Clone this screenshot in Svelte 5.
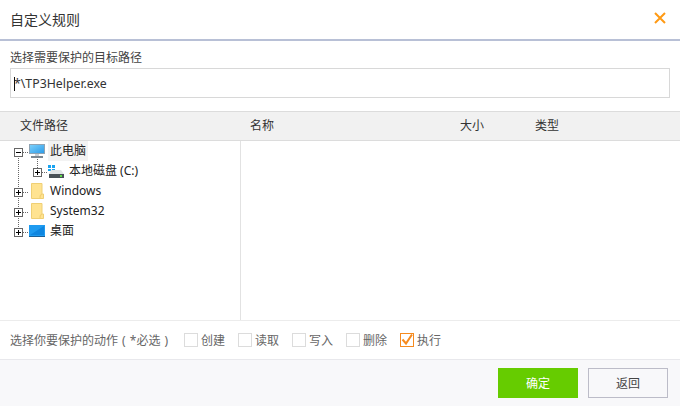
<script>
  const columns = [
    { label: '文件路径', width: 230 },
    { label: '名称', width: 210 },
    { label: '大小', width: 75 },
    { label: '类型', width: 100 }
  ];

  const actions = [
    { label: '创建', checked: false },
    { label: '读取', checked: false },
    { label: '写入', checked: false },
    { label: '删除', checked: false },
    { label: '执行', checked: true }
  ];

  const roots = [
    { label: 'Windows', icon: 'folder' },
    { label: 'System32', icon: 'folder' },
    { label: '桌面', icon: 'desktop' }
  ];
</script>

{#snippet expander(open)}
  <span class="expander">
    <svg width="9" height="9" viewBox="0 0 9 9">
      <rect x="0.500" y="0.500" width="8" height="8" fill="#fff" stroke="#666" />
      <path d={open ? 'M2 4.500h5' : 'M2 4.500h5M4.500 2v5'} stroke="#000" fill="none" />
    </svg>
  </span>
{/snippet}

{#snippet folder()}
  <svg width="13" height="16" viewBox="0 0 13 16">
    <path d="M0.500 0.500h10.500v10.500h1.500v4.500H0.500z" fill="#ffe391" stroke="#efcf74" />
    <path d="M9 15.500v-3l2-1.500" fill="#ffd873" stroke="#efcf74" />
  </svg>
{/snippet}

<div class="dialog">
  <header class="title-bar">
    <h1>自定义规则</h1>
    <button class="close" aria-label="关闭">
      <svg width="12" height="12" viewBox="0 0 12 12">
        <path d="M1 1l10 10M11 1L1 11" stroke="#ff9a14" stroke-width="2" fill="none" />
      </svg>
    </button>
  </header>

  <section class="target">
    <label for="target-path">选择需要保护的目标路径</label>
    <input id="target-path" value="*\TP3Helper.exe" />
    <span class="caret"></span>
  </section>

  <div class="columns">
    {#each columns as col}
      <span style="width: {col.width}px">{col.label}</span>
    {/each}
  </div>

  <div class="browser">
    <div class="tree">
      <div class="row">
        {@render expander(true)}
        <span class="dots"></span>
        <span class="icon">
          <svg width="16" height="14" viewBox="0 0 16 14">
            <defs>
              <linearGradient id="screen" x1="0" y1="0" x2="1" y2="1">
                <stop offset="0" stop-color="#7fd2fb" />
                <stop offset="1" stop-color="#2a9ae8" />
              </linearGradient>
            </defs>
            <rect x="0.500" y="0.500" width="15" height="9" fill="url(#screen)" stroke="#8fa3b3" />
            <rect x="6" y="10" width="4" height="2" fill="#c9d0d6" />
            <rect x="2" y="12" width="12" height="2" fill="#7b8791" />
          </svg>
        </span>
        <span class="name selected">此电脑</span>
        <span class="stem"></span>
      </div>
      <div class="row child">
        {@render expander(false)}
        <span class="dots"></span>
        <span class="icon">
          <svg width="16" height="13" viewBox="0 0 16 13">
            <rect x="0" y="0" width="3" height="3" fill="#19a3f0" />
            <rect x="4" y="0" width="3" height="3" fill="#19a3f0" />
            <rect x="0" y="4" width="3" height="2" fill="#19a3f0" />
            <rect x="4" y="4" width="3" height="2" fill="#19a3f0" />
            <path d="M3 5h10l3 4H1z" fill="#e2e5e7" />
            <rect x="1" y="9" width="15" height="4" fill="#4a5157" />
            <rect x="12" y="10" width="2" height="2" fill="#63e04c" />
          </svg>
        </span>
        <span class="name">本地磁盘 (C:)</span>
      </div>
      {#each roots as node}
        <div class="row">
          {@render expander(false)}
          <span class="dots"></span>
          {#if node.icon === 'folder'}
            <span class="icon folder">{@render folder()}</span>
          {:else}
            <span class="icon">
              <svg width="16" height="12" viewBox="0 0 16 12">
                <rect x="0" y="0" width="16" height="11" fill="#1f9bf0" />
                <path d="M1 10L15 1v9z" fill="#0f86e0" />
                <rect x="0" y="11" width="16" height="1" fill="#1b5f96" />
              </svg>
            </span>
          {/if}
          <span class="name">{node.label}</span>
        </div>
      {/each}
    </div>
    <div class="files"></div>
  </div>

  <div class="actions">
    <span class="prompt">选择你要保护的动作 ( *必选 )</span>
    {#each actions as action}
      <span class="action">
        <span class="box" class:checked={action.checked}>
          {#if action.checked}
            <svg width="12" height="12" viewBox="0 0 12 12">
              <path d="M1.500 5.500l3.500 4 6-9" stroke="#f68a1e" stroke-width="2" fill="none" />
            </svg>
          {/if}
        </span>
        {action.label}
      </span>
    {/each}
  </div>

  <footer class="footer">
    <button class="btn primary">确定</button>
    <button class="btn">返回</button>
  </footer>
</div>

<style>
  :global(body) {
    margin: 0;
    background: #fff;
  }

  .dialog {
    width: 680px;
    height: 406px;
    display: flex;
    flex-direction: column;
    overflow: hidden;
    font-family: "Noto Sans", "Noto Sans CJK SC", sans-serif;
    font-size: 12px;
    color: #333;
    background: #fff;
  }

  .title-bar {
    height: 39px;
    flex: none;
    display: flex;
    align-items: center;
    justify-content: space-between;
    padding: 0 14px 0 10px;
    border-bottom: 2px solid #b8c0d6;
  }

  h1 {
    margin: -2px 0 0;
    font-size: 14px;
    font-weight: 400;
    color: #333;
  }

  .close {
    width: 12px;
    height: 12px;
    padding: 0;
    border: none;
    background: none;
    display: block;
    margin-top: -3px;
  }

  .close svg {
    display: block;
  }

  .target {
    position: relative;
    flex: none;
    display: flex;
    flex-direction: column;
    height: 70px;
    padding: 8px 10px 0;
    box-sizing: border-box;
  }

  label {
    height: 19px;
    line-height: 18px;
    font-size: 12px;
    color: #444;
  }

  input {
    width: 660px;
    height: 30px;
    box-sizing: border-box;
    padding: 0 3px;
    border: 1px solid #d8d8d8;
    outline: none;
    font: inherit;
    font-size: 12.300px;
    color: #333;
  }

  .caret {
    position: absolute;
    left: 14px;
    top: 36px;
    width: 1px;
    height: 14px;
    background: #111;
  }

  .columns {
    flex: none;
    height: 30px;
    box-sizing: border-box;
    display: flex;
    align-items: center;
    padding: 0 0 2px 20px;
    background: #f1f1f1;
    border-top: 1px solid #dcdcdc;
    border-bottom: 1px solid #dcdcdc;
    color: #333;
  }

  .browser {
    flex: none;
    height: 179px;
    display: flex;
  }

  .tree {
    position: relative;
    width: 241px;
    box-sizing: border-box;
    border-right: 1px solid #e2e2e2;
  }

  /* dotted trunk joining the top level expanders */
  .tree::before {
    content: '';
    position: absolute;
    left: 18px;
    top: 15px;
    height: 73px;
    border-left: 1px dotted #666;
  }

  .files {
    flex: 1;
  }

  .row {
    position: relative;
    height: 20px;
    display: flex;
    align-items: center;
    padding-left: 14px;
    color: #222;
  }

  .row.child {
    padding-left: 33px;
  }

  .stem {
    position: absolute;
    left: 37px;
    top: 18px;
    height: 9px;
    border-left: 1px dotted #666;
  }

  .expander {
    position: relative;
    z-index: 1;
    width: 9px;
    height: 9px;
    flex: none;
    margin-top: 2px;
  }

  .expander svg {
    display: block;
  }

  .dots {
    width: 5px;
    flex: none;
    margin-top: 2px;
    border-top: 1px dotted #666;
  }

  .icon {
    width: 20px;
    flex: none;
    box-sizing: border-box;
    padding-left: 1px;
    display: flex;
    align-items: center;
  }

  .icon.folder {
    padding-left: 3px;
  }

  .name {
    padding-left: 2px;
    line-height: 16px;
    margin-top: -1px;
  }

  .selected {
    align-self: stretch;
    display: flex;
    align-items: center;
    width: 38px;
    margin-top: 0;
    background: #f3f3f3;
  }

  .actions {
    flex: none;
    height: 40px;
    box-sizing: border-box;
    display: flex;
    align-items: center;
    padding-left: 10px;
    color: #666;
    border-top: 1px solid #ececec;
    border-bottom: 1px solid #e8e8ec;
  }

  .prompt {
    width: 174px;
    flex: none;
    word-spacing: 1px;
  }

  .action {
    width: 54px;
    flex: none;
    display: flex;
    align-items: center;
    gap: 3px;
  }

  .box {
    width: 14px;
    height: 14px;
    flex: none;
    box-sizing: border-box;
    border: 1px solid #dcdcdc;
    display: block;
  }

  .box.checked {
    border-color: #f68a1e;
  }

  .box svg {
    display: block;
  }

  .footer {
    flex: 1;
    display: flex;
    justify-content: flex-end;
    align-items: flex-start;
    gap: 10px;
    padding: 8px 12px 0 0;
    background: #f8f8fa;
  }

  .btn {
    width: 80px;
    height: 30px;
    padding: 0;
    box-sizing: border-box;
    border: 1px solid #bcbcc8;
    background: transparent;
    font: inherit;
    color: #444;
  }

  .btn.primary {
    border: none;
    background: #66cc00;
    color: #fff;
  }
</style>
